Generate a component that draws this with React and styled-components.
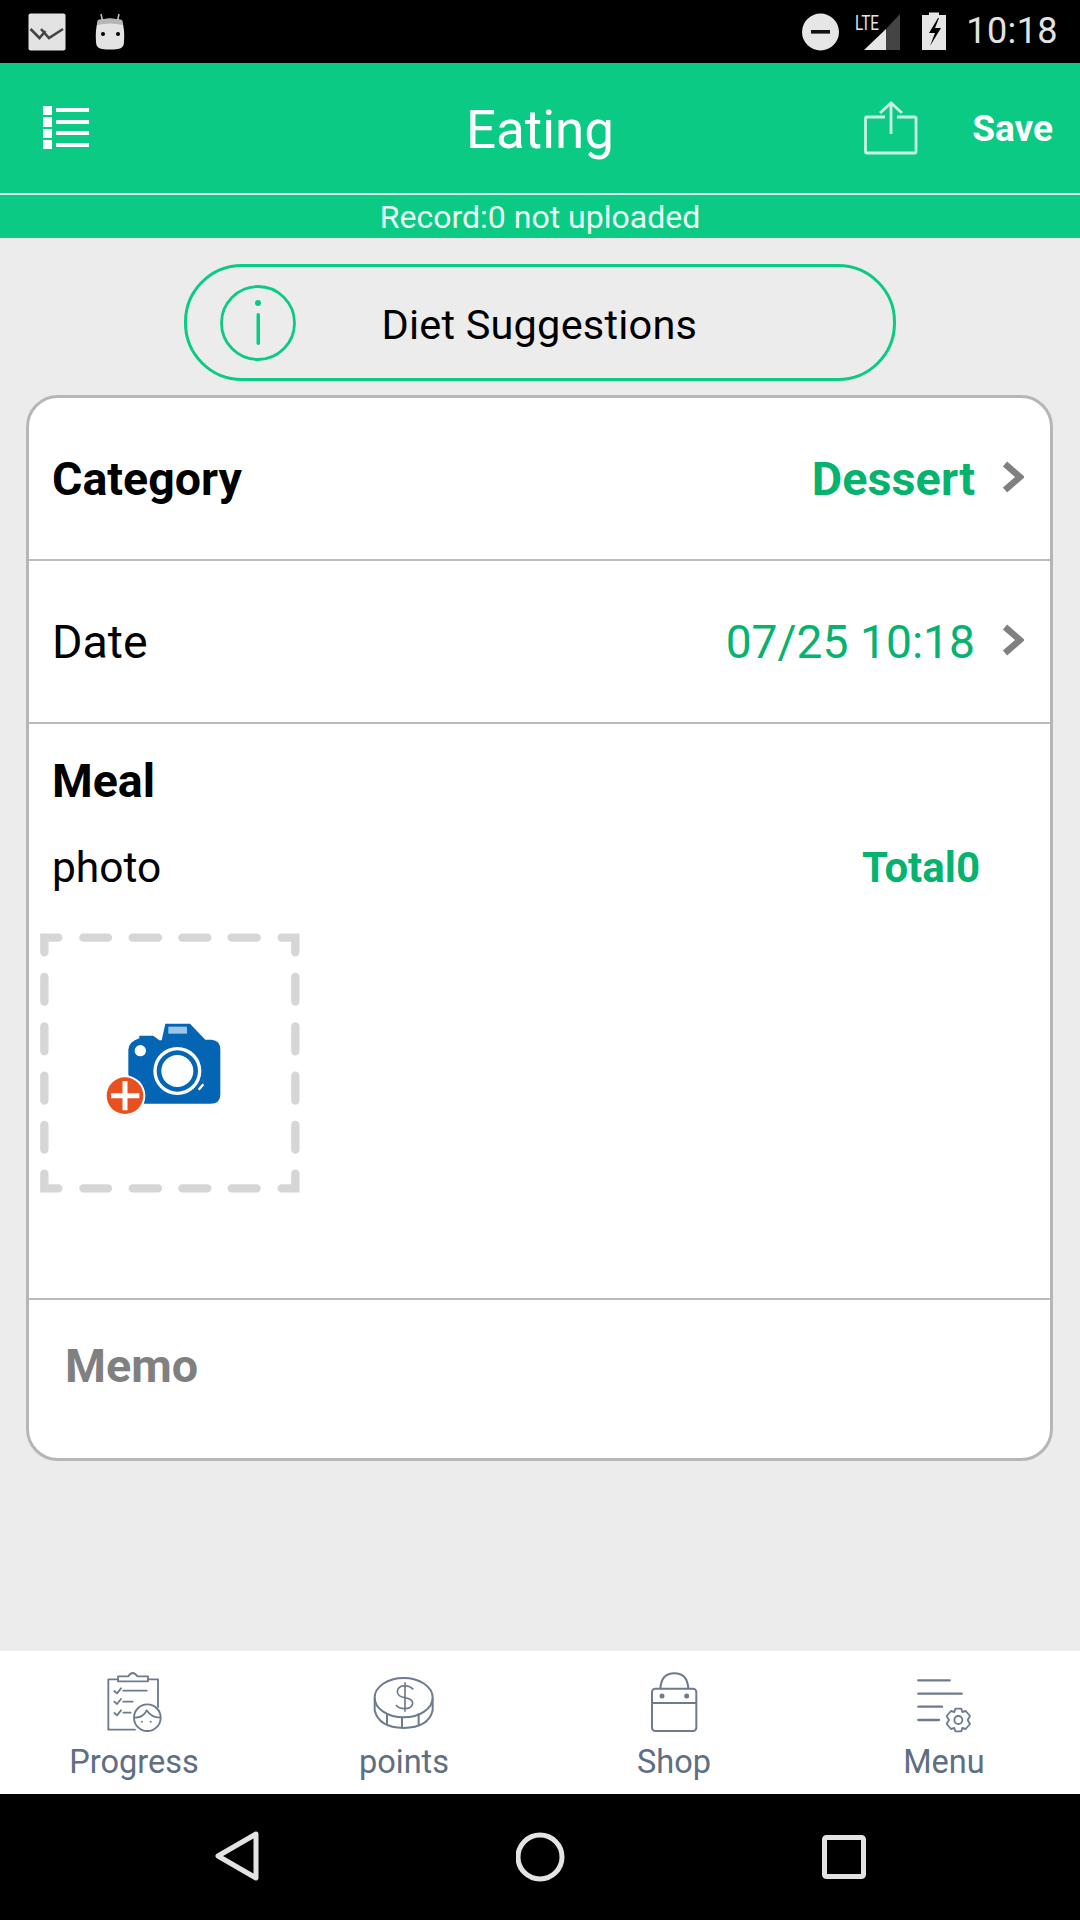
import React from "react";
import styled, { createGlobalStyle } from "styled-components";

const Global = createGlobalStyle`
  html, body { margin: 0; padding: 0; background: #ececec; }
  * { box-sizing: border-box; }
  body { font-family: Roboto, "Liberation Sans", sans-serif; }
`;
const Screen = styled.div`
  width: 1080px; height: 1920px; display: flex; flex-direction: column; background: #ececec; overflow: hidden;
`;
const StatusBar = styled.div`
  height: 63px; background: #000; display: flex; align-items: center; padding: 0 22px 0 28px; flex: none;
`;
const StatusLeft = styled.div`display: flex; align-items: center; gap: 29px; flex: 1;`;
const StatusRight = styled.div`display: flex; align-items: center;`;
const Clock = styled.span`
  color: #e3e3e3; font-size: 36px; margin-left: 20px; line-height: 63px; letter-spacing: 0.4px;
`;
const Header = styled.header`
  height: 132px; background: #0bcb84; border-bottom: 2px solid #dff7ee; display: grid; grid-template-columns: 1fr auto 1fr; align-items: center; flex: none; padding: 0 27px;
`;
const HeaderLeft = styled.div`
  padding-left: 16px;
`;
const HeaderTitle = styled.h1`
  margin: 0; text-align: center; color: #fff; font-size: 53px; font-weight: 400; line-height: 60px; padding-top: 4px;
`;
const HeaderActions = styled.div`
  display: flex; align-items: center; justify-content: flex-end; gap: 54px;
`;
const SaveLabel = styled.span`
  color: #fff; font-weight: 700; font-size: 37px;
`;
const RecordBar = styled.div`
  height: 43px; background: #0bcb84; color: #eafaf4; text-align: center; font-size: 32px; line-height: 45px; flex: none;
`;
const Content = styled.main`
  flex: 1; display: flex; flex-direction: column; padding: 26px 27px 0 26px;
`;
const Pill = styled.div`
  align-self: center; width: 712px; height: 117px; border: 3px solid #0bcb84; border-radius: 58px; display: flex; align-items: center; padding-left: 32px;
`;
const PillLabel = styled.span`
  font-size: 41.5px; color: #000; margin-left: 85px; letter-spacing: 0.2px; line-height: 50px; padding-top: 4px;
`;
const Card = styled.section`
  margin-top: 14px; background: #fff; border: 3px solid #b6b6b6; border-radius: 32px; height: 1066px; display: flex; flex-direction: column; overflow: hidden;
`;
const Row = styled.div`
  height: ${p => p.$h}px; flex: none; display: flex; align-items: center; border-bottom: 2.5px solid #bcbcbc; padding: 0 26px 0 23px;
`;
const RowLabel = styled.span`
  flex: 1; font-size: 46.5px; color: #000; font-weight: ${p => (p.$bold ? 700 : 400)};
`;
const RowValue = styled.span`
  font-size: ${p => (p.$bold ? 46.8 : 46.2)}px; color: #05b26e; font-weight: ${p => (p.$bold ? 700 : 400)}; margin-right: 27px;
`;
const MealBlock = styled.div`
  height: 576px; flex: none; border-bottom: 2.5px solid #bcbcbc; padding: 0 0 0 23px; display: flex; flex-direction: column;
`;
const MealTitle = styled.div`
  font-size: 46.5px; font-weight: 700; color: #000; margin-top: 32px; line-height: 50px;
`;
const PhotoRow = styled.div`
  display: flex; align-items: center; justify-content: space-between; margin-top: 37px; padding-right: 70px; line-height: 50px;
`;
const PhotoLabel = styled.span`font-size: 42.5px; color: #000;`;
const TotalLabel = styled.span`font-size: 42px; color: #05b26e; font-weight: 700;`;
const AddPhoto = styled.div`
  margin: 40px 0 0 -12px; width: 260px; height: 260px;
`;
const Memo = styled.div`
  flex: 1; padding: 41px 0 0 36px; font-size: 46.8px; font-weight: 700; color: #808080; line-height: 50px;
`;
const TabBar = styled.nav`
  height: 143px; background: #fff; display: grid; grid-template-columns: repeat(4, 270px); flex: none; margin-left: -1px;
`;
const Tab = styled.div`
  display: flex; flex-direction: column; align-items: center; padding-top: 20px;
`;
const TabIconBox = styled.div`
  height: 64px; display: flex; align-items: flex-start; justify-content: center;
`;
const TabLabel = styled.span`
  color: #5e6e83; font-size: 32.5px; line-height: 38px; margin-top: 8px;
`;
const NavBar = styled.div`
  height: 126px; background: #000; display: flex; align-items: center; flex: none; padding: 0 214px 0 215px; justify-content: space-between;
`;

const IconSvg = styled.svg`display: block; flex: none;`;

const MailIcon = () => (
  <IconSvg width="38" height="38" viewBox="0 0 38 38">
    <rect x="0.5" y="0.5" width="37" height="37" rx="2" fill="#e3e3e3" />
    <path d="M2.500 16l9 9 6-7M13 16l8 9 14-9" fill="none" stroke="#444" strokeWidth="2.600" />
  </IconSvg>
);
const AndroidIcon = () => (
  <IconSvg width="30" height="38" viewBox="0 0 30 38">
    <path d="M6 1l2 9M24 1l-2 9" stroke="#bbb" strokeWidth="1.6" fill="none" />
    <path d="M3 7q12-3 24 0q3 10 2 22q0 6-6 7q-8 1-16 0q-6-1-6-7q-1-12 2-22z" fill="#e3e3e3" />
    <path d="M3 7q12-3 24 0l1 5q-13-3-26 0z" fill="#b5b5b5" />
    <circle cx="8" cy="21" r="2" fill="#000" /><circle cx="23" cy="21" r="2" fill="#000" />
  </IconSvg>
);
const StatusGroup = () => (
  <IconSvg width="144" height="40" viewBox="0 0 144 40">
    <circle cx="18.500" cy="20" r="18.500" fill="#e6e6e6" />
    <rect x="9" y="18" width="19" height="3.600" fill="#111" />
    <text x="53" y="17.500" fontFamily="Roboto" fontSize="20" fill="#e6e6e6" textLength="24" lengthAdjust="spacingAndGlyphs">LTE</text>
    <path d="M62 38L84 17V38Z" fill="#e6e6e6" />
    <path d="M84 17L98 2V38H84Z" fill="#444" />
    <path d="M120 3h7v-2.500h10v2.500h7v35h-24z" fill="#e6e6e6" />
    <path d="M136 6l-9 15h6l-5 13 11-18h-6l4-10z" fill="#000" />
  </IconSvg>
);
const ListIcon = () => (
  <IconSvg width="46" height="44" viewBox="0 0 46 44">
    <g fill="#fff">
      <rect x="0" y="0" width="9" height="9" /><rect x="0" y="11" width="9" height="10" /><rect x="0" y="23" width="9" height="9" /><rect x="0" y="34" width="9" height="9" />
      <rect x="13" y="2" width="33" height="4" /><rect x="13" y="14" width="33" height="4" /><rect x="13" y="25" width="33" height="4" /><rect x="13" y="37" width="33" height="4" />
    </g>
  </IconSvg>
);
const UploadIcon = () => (
  <IconSvg width="54" height="54" viewBox="0 0 54 54">
    <path d="M27 33V3M16 12L27 2L38 12" fill="none" stroke="#c9f3e2" strokeWidth="2.800" />
    <path d="M21 16H3a1.500 1.500 0 0 0-1.500 1.500V50.500a1.500 1.500 0 0 0 1.500 1.500H50.500a1.500 1.500 0 0 0 1.500-1.500V17.500a1.500 1.500 0 0 0-1.500-1.500H33" fill="none" stroke="#c9f3e2" strokeWidth="2.800" />
  </IconSvg>
);
const InfoIcon = () => (
  <IconSvg width="78" height="78" viewBox="0 0 78 78">
    <circle cx="39" cy="39" r="36.500" fill="none" stroke="#0bcb84" strokeWidth="2.800" />
    <circle cx="39" cy="19" r="3" fill="#0bcb84" />
    <rect x="37.500" y="29" width="3.500" height="32" rx="1.700" fill="#0bcb84" />
  </IconSvg>
);
const ChevronSvg = styled(IconSvg)`margin-bottom: 4px;`;
const Chevron = () => (
  <ChevronSvg width="22" height="32" viewBox="0 0 22 32">
    <path d="M3 3L18 16L3 29" fill="none" stroke="#808080" strokeWidth="6.500" />
  </ChevronSvg>
);
const CameraTile = () => (
  <IconSvg width="260" height="260" viewBox="60 70 780 780">
    <g fill="none" stroke="#d6d6d6" strokeWidth="25" strokeLinecap="round">
      <path d="M115 84H73V128" />
      <path d="M190 84H264M338 84H414M487 84H562M635 84H710" />
      <path d="M785 84H826V128" />
      <path d="M73 202V276M73 350V425M73 498V573M73 646V720" />
      <path d="M826 202V276M826 350V425M826 498V573M826 646V720" />
      <path d="M73 792V836H115" />
      <path d="M190 836H264M338 836H414M487 836H562M635 836H710" />
      <path d="M785 836H826V792" />
    </g>
    <path d="M325 420Q327 396 358 386V378H400L418 392H425L436 342H510L556 390H575Q601 392 601 420V555Q600 582 572 582H372L325 495Z" fill="#0565b5" />
    <rect x="445" y="351" width="56" height="21" fill="#9cc6e8" />
    <circle cx="361" cy="423" r="17" fill="#fff" />
    <circle cx="472" cy="484" r="72" fill="#fff" />
    <circle cx="472" cy="484" r="62" fill="#0565b5" />
    <circle cx="472" cy="484" r="48" fill="#fff" />
    <path d="M536 540L550 524" stroke="#fff" strokeWidth="7" />
    <circle cx="315" cy="558" r="61" fill="#fff" />
    <circle cx="315" cy="558" r="55" fill="#e8501f" />
    <path d="M315 514V602M273 558H358" stroke="#fff" strokeWidth="15" />
  </IconSvg>
);
const ProgressIcon = () => (
  <IconSvg width="58" height="64" viewBox="305 92 174 192">
    <g fill="none" stroke="#6d7b8d" strokeWidth="5.500" strokeLinecap="round" strokeLinejoin="round">
      <path d="M395 268H315V117H464V200" />
      <path d="M344 108H375Q388 88 402 108H434V123H344Z" fill="#fff" />
      <path d="M333 152l8 7 12-15M333 184l8 7 12-15M333 218l8 7 12-15" />
      <path d="M360 151H430M360 184H388M360 217H382" />
      <circle cx="432" cy="232" r="40" fill="#fff" />
      <path d="M394 232Q420 232 430 210Q444 232 470 232" />
    </g>
    <circle cx="416" cy="244" r="3" fill="#6d7b8d" /><circle cx="442" cy="244" r="3" fill="#6d7b8d" />
  </IconSvg>
);
const CoinIcon = () => (
  <IconSvg width="64" height="64" viewBox="1078 90 192 192">
    <g fill="none" stroke="#6d7b8d" strokeWidth="6">
      <ellipse cx="1173" cy="170" rx="87" ry="59" />
      <path d="M1086 172V208Q1098 260 1173 261Q1248 260 1260 208V172" />
      <path d="M1123 217V251M1168 228V260M1218 217V251" />
      <path d="M1202 145Q1190 134 1175 134Q1154 136 1154 153Q1156 167 1176 170Q1200 174 1200 187Q1198 203 1175 203Q1158 203 1150 192M1177 124V212" strokeWidth="5" />
    </g>
  </IconSvg>
);
const BagIcon = () => (
  <IconSvg width="48" height="64" viewBox="316 90 144 192">
    <g fill="none" stroke="#6d7b8d" strokeWidth="6">
      <rect x="322" y="143" width="133" height="127" rx="10" />
      <path d="M322 186H455" />
      <path d="M347 143Q350 97 389 97Q428 97 431 143" />
    </g>
    <circle cx="352" cy="165" r="7.500" fill="#6d7b8d" /><circle cx="426" cy="165" r="7.500" fill="#6d7b8d" />
  </IconSvg>
);
const MenuIcon = () => (
  <IconSvg width="58" height="64" viewBox="1090 90 174 192">
    <g fill="none" stroke="#6d7b8d" strokeLinecap="round">
      <path d="M1100 118H1194M1100 158H1230M1100 197H1171M1100 237H1162" strokeWidth="7" />
      <circle cx="1220" cy="237" r="12" strokeWidth="5.500" />
      <path d="M1211 203h18l3 10 10-3 13 15-7 12 7 12-13 15-10-3-3 10h-18l-3-10-10 3-13-15 7-12-7-12 13-15 10 3z" strokeWidth="5.500" strokeLinejoin="round" />
    </g>
  </IconSvg>
);
const BackIcon = () => (
  <IconSvg width="44" height="52" viewBox="0 0 44 52">
    <path d="M41 3L3 25L41 47Z" fill="none" stroke="#e3e3e3" strokeWidth="5" strokeLinejoin="round" />
  </IconSvg>
);
const HomeIcon = () => (
  <IconSvg width="50" height="50" viewBox="0 0 50 50">
    <circle cx="24" cy="25" r="22" fill="none" stroke="#e3e3e3" strokeWidth="5" />
  </IconSvg>
);
const RecentIcon = () => (
  <IconSvg width="44" height="44" viewBox="0 0 44 44">
    <rect x="2.500" y="2.500" width="39" height="39" rx="2" fill="none" stroke="#e3e3e3" strokeWidth="5" />
  </IconSvg>
);

export default function App() {
  return (
    <Screen>
      <Global />
      <StatusBar>
        <StatusLeft><MailIcon /><AndroidIcon /></StatusLeft>
        <StatusRight><StatusGroup /><Clock>10:18</Clock></StatusRight>
      </StatusBar>
      <Header>
        <HeaderLeft><ListIcon /></HeaderLeft>
        <HeaderTitle>Eating</HeaderTitle>
        <HeaderActions>
          <UploadIcon />
          <SaveLabel>Save</SaveLabel>
        </HeaderActions>
      </Header>
      <RecordBar>Record:0 not uploaded</RecordBar>
      <Content>
        <Pill><InfoIcon /><PillLabel>Diet Suggestions</PillLabel></Pill>
        <Card>
          <Row $h={163}>
            <RowLabel $bold>Category</RowLabel>
            <RowValue $bold>Dessert</RowValue>
            <Chevron />
          </Row>
          <Row $h={163}>
            <RowLabel>Date</RowLabel>
            <RowValue>07/25 10:18</RowValue>
            <Chevron />
          </Row>
          <MealBlock>
            <MealTitle>Meal</MealTitle>
            <PhotoRow><PhotoLabel>photo</PhotoLabel><TotalLabel>Total0</TotalLabel></PhotoRow>
            <AddPhoto><CameraTile /></AddPhoto>
          </MealBlock>
          <Memo>Memo</Memo>
        </Card>
      </Content>
      <TabBar>
        <Tab><TabIconBox><ProgressIcon /></TabIconBox><TabLabel>Progress</TabLabel></Tab>
        <Tab><TabIconBox><CoinIcon /></TabIconBox><TabLabel>points</TabLabel></Tab>
        <Tab><TabIconBox><BagIcon /></TabIconBox><TabLabel>Shop</TabLabel></Tab>
        <Tab><TabIconBox><MenuIcon /></TabIconBox><TabLabel>Menu</TabLabel></Tab>
      </TabBar>
      <NavBar><BackIcon /><HomeIcon /><RecentIcon /></NavBar>
    </Screen>
  );
}
